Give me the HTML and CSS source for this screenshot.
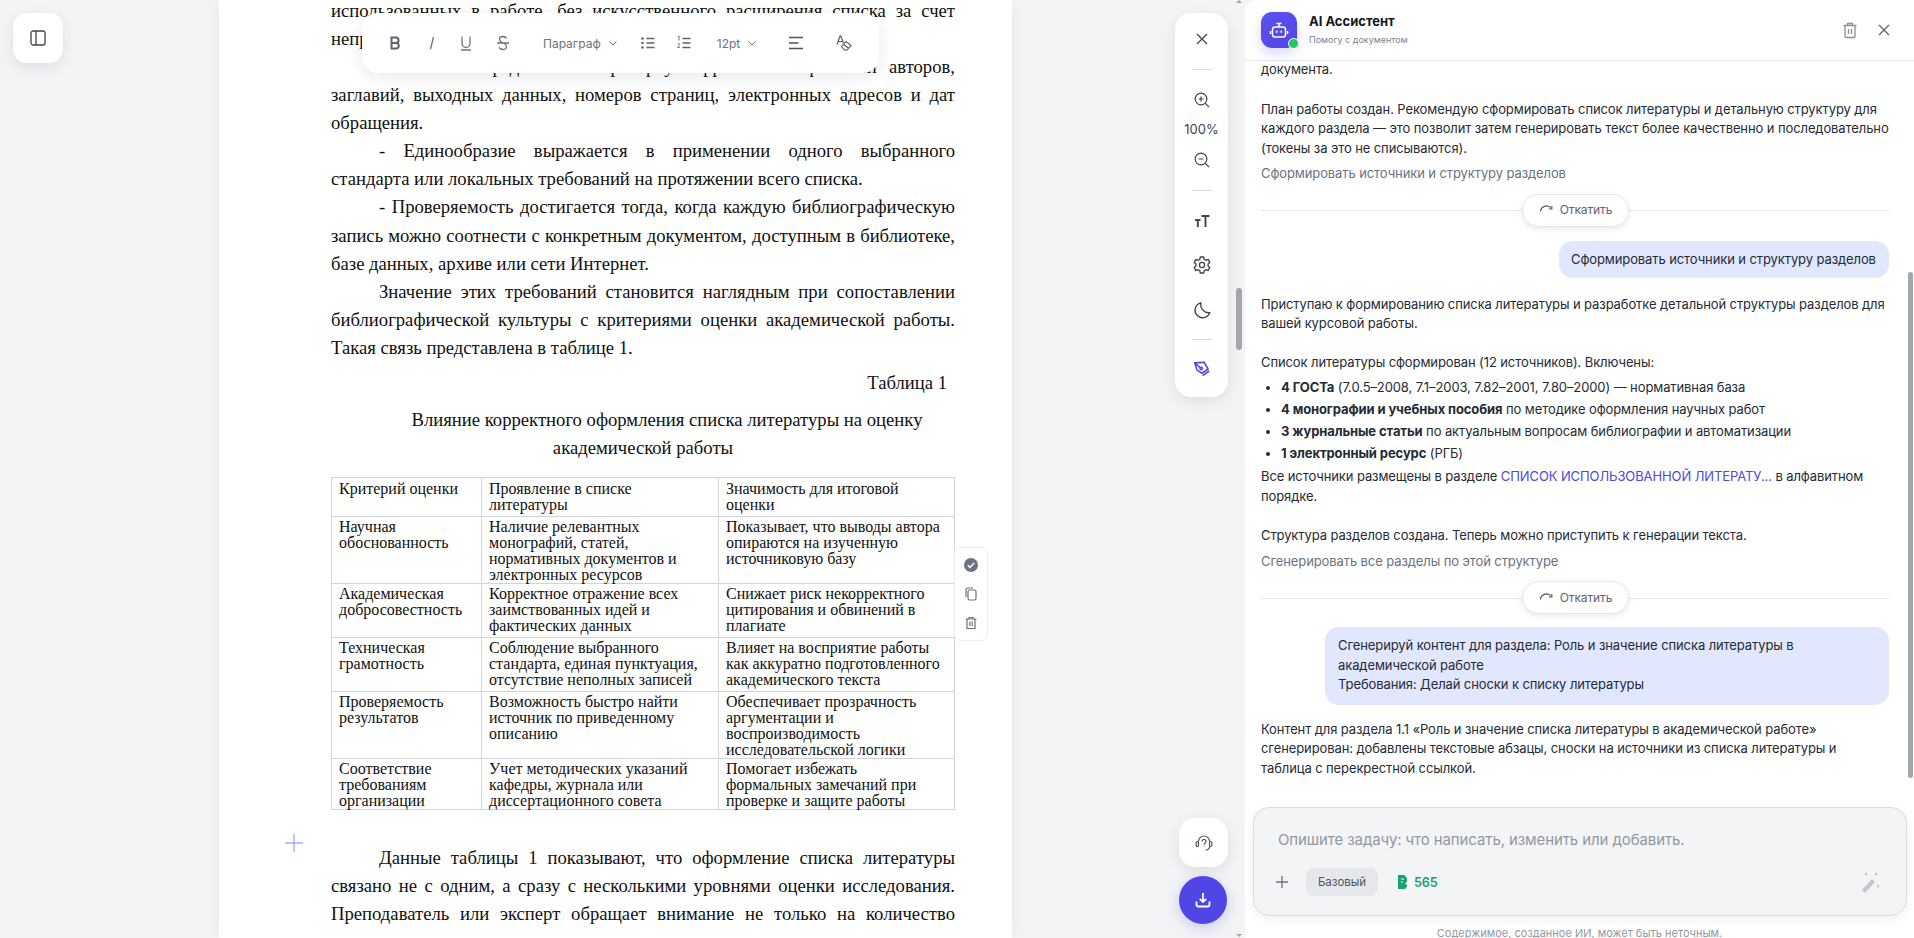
FILE: index.html
```html
<!DOCTYPE html>
<html lang="ru">
<head>
<meta charset="utf-8">
<title>AI Ассистент</title>
<link rel="stylesheet" href="styles.css">
</head>
<body>
<div class="app">
  <aside class="gutter">
    <button class="side-btn"><svg width="18" height="18" viewBox="0 0 18 18" fill="none" stroke="#3f4651" stroke-width="1.3"><rect x="2" y="2" width="14" height="14" rx="2"/><path d="M7 2v14"/></svg></button>
  </aside>
  <main class="page">
    <div class="sheet">
      <p class="p cont">использованных в работе, без искусственного расширения списка за счет</p>
      <p class="p last">непроверенных источников.</p>
      <p class="p ind">- Точность предполагает проверку корректности фамилий авторов,</p>
      <p class="p">заглавий, выходных данных, номеров страниц, электронных адресов и дат</p>
      <p class="p last">обращения.</p>
      <p class="p ind">- Единообразие выражается в применении одного выбранного</p>
      <p class="p last">стандарта или локальных требований на протяжении всего списка.</p>
      <p class="p ind">- Проверяемость достигается тогда, когда каждую библиографическую</p>
      <p class="p">запись можно соотнести с конкретным документом, доступным в библиотеке,</p>
      <p class="p last">базе данных, архиве или сети Интернет.</p>
      <p class="p ind">Значение этих требований становится наглядным при сопоставлении</p>
      <p class="p">библиографической культуры с критериями оценки академической работы.</p>
      <p class="p last">Такая связь представлена в таблице 1.</p>
      <p class="tcap">Таблица 1</p>
      <p class="ttitle">Влияние корректного оформления списка литературы на оценку академической работы</p>
      <div class="twrap">
        <table class="tbl">
          <colgroup><col class="c1"><col class="c2"><col class="c3"></colgroup>
          <tr class="head"><td>Критерий оценки</td><td>Проявление в списке литературы</td><td>Значимость для итоговой оценки</td></tr>
          <tr class="tight"><td>Научная обоснованность</td><td>Наличие релевантных монографий, статей, нормативных документов и электронных ресурсов</td><td>Показывает, что выводы автора опираются на изученную источниковую базу</td></tr>
          <tr><td>Академическая добросовестность</td><td>Корректное отражение всех заимствованных идей и фактических данных</td><td>Снижает риск некорректного цитирования и обвинений в плагиате</td></tr>
          <tr><td>Техническая грамотность</td><td>Соблюдение выбранного стандарта, единая пунктуация, отсутствие неполных записей</td><td>Влияет на восприятие работы как аккуратно подготовленного академического текста</td></tr>
          <tr class="tight"><td>Проверяемость результатов</td><td>Возможность быстро найти источник по приведенному описанию</td><td>Обеспечивает прозрачность аргументации и воспроизводимость исследовательской логики</td></tr>
          <tr class="tight"><td>Соответствие требованиям организации</td><td>Учет методических указаний кафедры, журнала или диссертационного совета</td><td>Помогает избежать формальных замечаний при проверке и защите работы</td></tr>
        </table>
        <div class="tactions">
          <svg width="16" height="16" viewBox="0 0 16 16"><circle cx="8" cy="8" r="7" fill="#6b7280"/><path d="M4.800 8.200l2.200 2.200 4.200-4.400" fill="none" stroke="#fff" stroke-width="1.500"/></svg>
          <svg width="16" height="16" viewBox="0 0 16 16" fill="none" stroke="#6b7280" stroke-width="1.200"><rect x="5" y="4" width="8" height="10" rx="1.500"/><path d="M3 11V3.500A1.500 1.500 0 0 1 4.500 2H10"/></svg>
          <svg width="16" height="16" viewBox="0 0 16 16" fill="none" stroke="#6b7280" stroke-width="1.200"><path d="M2.500 4h11M6 4V2.500h4V4M4 4v9.500h8V4M6.800 6.500v4.500M9.200 6.500v4.500"/></svg>
        </div>
        <svg class="addrow" width="20" height="20" viewBox="0 0 20 20" fill="none" stroke="#a3b3f5" stroke-width="1.400"><path d="M10 1v18M1 10h18"/></svg>
      </div>
      <p class="p ind first-after">Данные таблицы 1 показывают, что оформление списка литературы</p>
      <p class="p">связано не с одним, а сразу с несколькими уровнями оценки исследования.</p>
      <p class="p">Преподаватель или эксперт обращает внимание не только на количество</p>
    </div>
    <div class="toolbar">
      <svg class="ti" viewBox="0 0 18 18" fill="none" stroke="#5b6470" stroke-width="2"><path d="M5.500 3.500h4.300a2.700 2.700 0 0 1 0 5.500H5.500zM5.500 9h5a2.800 2.800 0 0 1 0 5.500h-5z"/></svg>
      <svg class="ti g1" viewBox="0 0 18 18" fill="none" stroke="#6b7280" stroke-width="1.300"><path d="M10.500 3L7.500 15"/></svg>
      <svg class="ti g2" viewBox="0 0 18 18" fill="none" stroke="#6b7280" stroke-width="1.300"><path d="M5 2.500v7a4 4 0 0 0 8 0v-7M4 16h10"/></svg>
      <svg class="ti g3" viewBox="0 0 18 18" fill="none" stroke="#6b7280" stroke-width="1.300"><path d="M12.500 4.500C12 3 10.500 2.500 9 2.500 7 2.500 5.500 3.500 5.500 5.200S7 8 9 9c2 .8 3.500 1.500 3.500 3.300s-1.500 3.200-3.500 3.200c-1.700 0-3.200-.7-3.800-2.200M3 9h12"/></svg>
      <span class="tsel par">Параграф <svg width="10" height="10" viewBox="0 0 10 10" fill="none" stroke="#6b7280"><path d="M1.500 3.500L5 7l3.500-3.500"/></svg></span>
      <svg class="ti l1" viewBox="0 0 18 18" fill="none" stroke="#5b6470" stroke-width="1.500"><path d="M7.500 4.500h8M7.500 9h8M7.500 13.500h8"/><circle cx="3.500" cy="4.500" r="1.300" fill="#5b6470" stroke="none"/><circle cx="3.500" cy="9" r="1.300" fill="#5b6470" stroke="none"/><circle cx="3.500" cy="13.500" r="1.300" fill="#5b6470" stroke="none"/></svg>
      <svg class="ti g4" viewBox="0 0 18 18" fill="none" stroke="#5b6470" stroke-width="1.300"><path d="M7.500 4.500h8M7.500 9h8M7.500 13.500h8"/><path d="M3 2.500l1-.5v4.500M2.500 10c.5-.8 2.300-.7 2.300.5 0 1-1.300 1.500-2.300 2.800h2.500" stroke-width=".9"/></svg>
      <span class="tsel pt">12pt <svg width="10" height="10" viewBox="0 0 10 10" fill="none" stroke="#6b7280"><path d="M1.500 3.500L5 7l3.500-3.500"/></svg></span>
      <svg class="ti al" viewBox="0 0 18 18" fill="none" stroke="#4b5563" stroke-width="1.700"><path d="M2 3.500h14M2 9h9.500M2 14.500h14"/></svg>
      <svg class="ti g5" viewBox="0 0 18 18" fill="none" stroke="#4b5563" stroke-width="1.100"><path d="M2 10.500L5 2h.8l2.700 7M3 7.500h4.300M6.500 12.500l4.500-5 5 4-4 4.500H9.500zM8.500 10.300l5 4"/></svg>
    </div>
  </main>
  <nav class="tools">
    <div class="tool-card">
      <svg class="i" viewBox="0 0 18 18" fill="none" stroke="#3f4651" stroke-width="1.300"><path d="M4 4l10 10M14 4L4 14"/></svg>
      <i class="sep sep1"></i>
      <svg class="i zoom1" viewBox="0 0 18 18" fill="none" stroke="#3f4651" stroke-width="1.200"><circle cx="8" cy="8" r="5.800"/><path d="M12.300 12.300L16 16M8 5.500v5M5.500 8h5"/></svg>
      <span class="pct">100%</span>
      <svg class="i zoom2" viewBox="0 0 18 18" fill="none" stroke="#3f4651" stroke-width="1.200"><circle cx="8" cy="8" r="5.800"/><path d="M12.300 12.300L16 16M5.500 8h5"/></svg>
      <i class="sep sep2"></i>
      <svg class="tt" viewBox="0 0 20 20" fill="none" stroke="#3f4651" stroke-width="1.900"><path d="M9.500 5h8M13.500 5v11M3 9h5.500M5.800 9v7"/></svg>
      <svg class="i gear" viewBox="0 0 18 18" fill="none" stroke="#3f4651" stroke-width="1.200"><path d="M7.500 1.800h3l.5 2 1.600.9 2-.6 1.400 2.500-1.500 1.500v1.800l1.500 1.500-1.400 2.500-2-.6-1.600.9-.5 2h-3l-.5-2-1.600-.9-2 .6L2 11.400l1.500-1.500V8.100L2 6.600l1.400-2.500 2 .6L7 3.800z"/><circle cx="9" cy="9" r="2.300"/></svg>
      <svg class="i moon" viewBox="0 0 18 18" fill="none" stroke="#3f4651" stroke-width="1.200"><path d="M8 2.500a6.800 6.800 0 1 0 8 8.800c-4.500 1-8.800-3.500-8-8.800z"/></svg>
      <i class="sep sep3"></i>
      <svg class="i pen" viewBox="0 0 18 18" fill="none" stroke="#4f46e5" stroke-width="1.400"><path d="M2.500 3.500l8.500-.5 3.500 6-5.500 3.800-4.500-2.800zM2.500 3.500l4.800 4.300M9.500 15l6-4.200"/><circle cx="8.300" cy="8.500" r="1.100"/></svg>
    </div>
    <div class="bottom-tools">
      <button class="help"><svg width="20" height="20" viewBox="0 0 20 20" fill="none" stroke="#4b5563" stroke-width="1.200"><path d="M4.500 8.500a5.500 5.500 0 0 1 11 0"/><rect x="2.200" y="8.500" width="2.300" height="5" rx="1"/><rect x="15.500" y="8.500" width="2.300" height="5" rx="1"/><path d="M15.500 13.500c0 2.500-2 3.500-4 3.500M8 8.500a2 2 0 1 1 3 1.700c-.7.500-1 .900-1 1.600M10 13.300v.5"/></svg></button>
      <button class="dl"><svg width="20" height="20" viewBox="0 0 20 20" fill="none" stroke="#fff" stroke-width="1.800"><path d="M10 3v9M6.700 8.800l3.300 3.300 3.300-3.300M3.500 11.500v3a2 2 0 0 0 2 2h9a2 2 0 0 0 2-2v-3"/></svg></button>
    </div>
    <i class="doc-thumb"></i>
    <i class="arrow up"></i>
    <i class="arrow down"></i>
  </nav>
  <section class="panel">
    <header class="phead">
      <div class="avatar">
        <svg width="20" height="20" viewBox="0 0 20 20" fill="none" stroke="#fff" stroke-width="1.500"><rect x="3.500" y="7" width="13" height="10" rx="2.500"/><path d="M10 7V4M7.500 3.500h5M1.500 11v3M18.500 11v3M7.800 10.800v2M12.200 10.800v2"/></svg>
        <i class="dot"></i>
      </div>
      <div class="ptitle"><b>AI Ассистент</b><span>Помогу с документом</span></div>
      <svg class="hicon trash" viewBox="0 0 18 18" fill="none" stroke="#8b8f96" stroke-width="1.300"><path d="M2.500 4.500h13M6.500 4.500V2.500h5v2M4 4.500v11a1 1 0 0 0 1 1h8a1 1 0 0 0 1-1v-11M7.500 8v5M10.500 8v5"/></svg>
      <svg class="hicon close" viewBox="0 0 18 18" fill="none" stroke="#5b6470" stroke-width="1.300"><path d="M4 4l10 10M14 4L4 14"/></svg>
    </header>
    <div class="chat">
      <div class="thread">
        <p class="m">документа.</p>
        <p class="m gap">План работы создан. Рекомендую сформировать список литературы и детальную структуру для каждого раздела — это позволит затем генерировать текст более качественно и последовательно (токены за это не списываются).</p>
        <p class="sug">Сформировать источники и структуру разделов</p>
        <div class="rollback"><span><svg width="16" height="16" viewBox="0 0 16 16" fill="none" stroke="#4b5563" stroke-width="1.200"><path d="M2.500 9.500A6 6 0 0 1 12.500 5.500M13.800 4v3h-3" /></svg>Откатить</span></div>
        <div class="user one">Сформировать источники и структуру разделов</div>
        <p class="m a1">Приступаю к формированию списка литературы и разработке детальной структуры разделов для вашей курсовой работы.</p>
        <p class="m gap2">Список литературы сформирован (12 источников). Включены:</p>
        <ul class="lst">
          <li><b>4 ГОСТа</b> (7.0.5–2008, 7.1–2003, 7.82–2001, 7.80–2000) — нормативная база</li>
          <li><b>4 монографии и учебных пособия</b> по методике оформления научных работ</li>
          <li><b>3 журнальные статьи</b> по актуальным вопросам библиографии и автоматизации</li>
          <li><b>1 электронный ресурс</b> (РГБ)</li>
        </ul>
        <p class="m">Все источники размещены в разделе <a class="link">СПИСОК ИСПОЛЬЗОВАННОЙ ЛИТЕРАТУ...</a> в алфавитном порядке.</p>
        <p class="m gap">Структура разделов создана. Теперь можно приступить к генерации текста.</p>
        <p class="sug">Сгенерировать все разделы по этой структуре</p>
        <div class="rollback"><span><svg width="16" height="16" viewBox="0 0 16 16" fill="none" stroke="#4b5563" stroke-width="1.200"><path d="M2.500 9.500A6 6 0 0 1 12.500 5.500M13.800 4v3h-3" /></svg>Откатить</span></div>
        <div class="user two">Сгенерируй контент для раздела: Роль и значение списка литературы в академической работе<br>Требования: Делай сноски к списку литературы</div>
        <p class="m a2">Контент для раздела 1.1 «Роль и значение списка литературы в академической работе» сгенерирован: добавлены текстовые абзацы, сноски на источники из списка литературы и таблица с перекрестной ссылкой.</p>
      </div>
      <div class="sbar"><i></i></div>
    </div>
    <div class="composer">
      <div class="ph">Опишите задачу: что написать, изменить или добавить.</div>
      <div class="crow">
        <svg width="16" height="16" viewBox="0 0 16 16" fill="none" stroke="#6b7280" stroke-width="1.300"><path d="M8 2v12M2 8h12"/></svg>
        <span class="tier">Базовый</span>
        <span class="tok"><svg width="14" height="16" viewBox="0 0 14 16"><path d="M2 1h6l3 3v3.500L9 9.500l2.500 2L9 15H2z" fill="#16a36f"/><path d="M5 5h3M5 8h2" stroke="#fff" stroke-width="1.200"/></svg>565</span>
        <svg class="wand" width="24" height="24" viewBox="0 0 24 24" fill="none"><path d="M3 20l10-11 3 3-10 11z" fill="#c4c8ce"/><path d="M6 3l2 2M8 3L6 5M16 3l2 2M18 3l-2 2M18 15l2 2M20 15l-2 2" stroke="#c4c8ce" stroke-width="1.200"/></svg>
      </div>
    </div>
    <div class="foot">Содержимое, созданное ИИ, может быть неточным.</div>
  </section>
</div>
</body>
</html>
```
FILE: styles.css
```css
* { box-sizing: border-box; }
html, body { margin: 0; height: 100%; overflow: hidden; }
body { font-family: "Inter", "Noto Sans", sans-serif; background: #f3f4f6; color: #1f2937; }
p { margin: 0; }
button { border: 0; padding: 0; cursor: pointer; }
.app { display: flex; width: 1914px; height: 938px; overflow: hidden; }

.gutter { width: 219px; flex: none; padding: 13px 0 0 13px; }
.side-btn { width: 50px; height: 50px; border-radius: 14px; background: #fff; box-shadow: 0 4px 14px rgba(30,40,60,.1); display: flex; align-items: center; justify-content: center; }

.page { width: 793px; flex: none; position: relative; background: #fff; box-shadow: 0 0 12px rgba(30,40,60,.06); overflow: hidden; }
.sheet { padding: 0 57px 0 112px; margin-top: -3px; font: 18.67px/28.07px "Liberation Serif", serif; color: #111; }
.p { text-align: justify; text-align-last: justify; white-space: nowrap; }
.p.last { text-align-last: left; }
.ind { text-indent: 48px; }
.tcap { text-align: right; padding-right: 8px; margin-top: 7px; }
.ttitle { width: 560px; margin: 9px auto 0; text-align: center; text-indent: 48px; }
.twrap { position: relative; margin-top: 15px; }
.tbl { width: 623px; table-layout: fixed; border-collapse: collapse; font-size: 16px; line-height: 16px; }
.c1 { width: 150px; } .c2 { width: 237px; } .c3 { width: 236px; }
.tbl td { border: 1px solid #d1d5db; padding: 2px 7px 3px; vertical-align: top; }
.tbl .head td { padding-top: 3px; }
.tbl .tight td { padding-bottom: 0; }
.tactions { position: absolute; left: 623px; top: 70px; width: 34px; height: 94px; padding: 9px 0; background: #fff; border: 1px solid #eceef1; border-radius: 7px; display: flex; flex-direction: column; align-items: center; justify-content: space-between; }
.addrow { position: absolute; left: -47px; bottom: -43px; }
.first-after { margin-top: 34px; }

.toolbar { position: absolute; left: 143px; top: 13px; width: 517px; height: 60px; border-radius: 16px; background: #fff; box-shadow: 0 4px 16px rgba(30,40,60,.1); display: flex; align-items: center; padding: 0 0 0 24px; color: #6b7280; font-size: 12px; }
.ti { width: 18px; height: 18px; flex: none; }
.g1 { margin-left: 19px; } .g2 { margin-left: 16px; } .g3 { margin-left: 19px; }
.tsel { display: inline-flex; align-items: center; gap: 7px; white-space: nowrap; }
.par { margin-left: 31px; }
.l1 { margin-left: 21px; } .g4 { margin-left: 18px; }
.pt { margin-left: 24px; }
.al { margin-left: 30px; } .g5 { margin-left: 30px; }

.tools { width: 233px; flex: none; position: relative; display: flex; flex-direction: column; justify-content: space-between; align-items: flex-start; padding: 13px 0 14px 163px; }
.tool-card { width: 53px; height: 384px; flex: none; background: #fff; border-radius: 16px; box-shadow: 0 4px 14px rgba(30,40,60,.1); display: flex; flex-direction: column; align-items: center; padding-top: 17px; }
.i { width: 18px; height: 18px; flex: none; }
.sep { display: block; width: 20px; height: 1px; background: #d8dce1; flex: none; }
.sep1 { margin-top: 21px; } .zoom1 { margin-top: 21px; }
.pct { font-size: 13px; color: #3f4651; margin-top: 13px; line-height: 15px; }
.zoom2 { margin-top: 14px; } .sep2 { margin-top: 21px; }
.tt { margin-top: 20px; width: 20px; height: 20px; flex: none; }
.gear { margin-top: 24px; width: 20px; height: 20px; } .moon { margin-top: 25px; width: 20px; height: 20px; }
.sep3 { margin-top: 19px; } .pen { margin-top: 19px; width: 20px; height: 20px; }
.bottom-tools { display: flex; flex-direction: column; gap: 9px; margin-left: 4px; }
.help { width: 49px; height: 49px; border-radius: 16px; background: #fff; box-shadow: 0 4px 14px rgba(30,40,60,.1); display: flex; align-items: center; justify-content: center; }
.dl { width: 48px; height: 48px; border-radius: 50%; background: #4f46e5; box-shadow: 0 4px 14px rgba(79,70,229,.25); display: flex; align-items: center; justify-content: center; }
.doc-thumb { position: absolute; right: 3px; top: 288px; width: 6px; height: 62px; border-radius: 3px; background: #a3a6ab; }
.arrow { position: absolute; right: 3px; width: 0; height: 0; border-left: 3px solid transparent; border-right: 3px solid transparent; }
.arrow.up { top: 0; border-bottom: 3px solid #a3a6ab; }
.arrow.down { bottom: 1px; border-top: 3px solid #a3a6ab; }

.panel { flex: 1; background: #fff; display: flex; flex-direction: column; min-width: 0; border-top-left-radius: 12px; }
.phead { height: 61px; flex: none; border-bottom: 1px solid #e5e7eb; display: flex; align-items: center; padding: 0 21px 0 16px; }
.avatar { width: 36px; height: 36px; border-radius: 11px; background: linear-gradient(135deg,#5b52f0,#4f46e5); position: relative; display: flex; align-items: center; justify-content: center; box-shadow: 0 6px 12px rgba(79,70,229,.2); margin-top: -1px; }
.dot { position: absolute; right: -2px; bottom: -1px; width: 11px; height: 11px; border-radius: 50%; background: #22c55e; border: 1.500px solid #fff; }
.ptitle { margin-left: 12px; display: flex; flex-direction: column; flex: 1; margin-top: -2px; }
.ptitle b { font-size: 13px; line-height: 17px; font-weight: 700; color: #111827; }
.ptitle span { font-size: 9px; line-height: 12px; margin-top: 4px; color: #7b8390; }
.hicon { width: 18px; height: 18px; flex: none; }
.close { margin-left: 16px; }

.chat { flex: 1; min-height: 0; position: relative; overflow: hidden; }
.thread { padding: 0 25px 0 16px; font-size: 13px; line-height: 19.500px; color: #242b36; letter-spacing: -.1px; margin-top: -1px; }
.gap { margin-top: 20px; }
.gap2 { margin-top: 19px; }
.sug { color: #6b7280; margin-top: 6px; }
.rollback { position: relative; margin-top: 10px; height: 33px; display: flex; justify-content: center; align-items: center; }
.rollback::before { content: ""; position: absolute; left: 0; right: 0; top: 50%; height: 1px; background: #e5e7eb; }
.rollback span { position: relative; background: #fff; border: 1px solid #e5e7eb; border-radius: 17px; height: 33px; width: 107px; display: inline-flex; align-items: center; justify-content: center; gap: 6px; font-size: 12px; color: #5b6470; box-shadow: 0 2px 6px rgba(30,40,60,.1); }
.user { background: #e0e7ff; border-radius: 14px; margin-left: auto; }
.user.one { width: 330px; height: 37px; margin-top: 14px; padding: 9px 12px; white-space: nowrap; }
.user.two { width: 564px; margin-top: 13px; padding: 9px 13px 10px; }
.a1 { margin-top: 17px; }
.a2 { margin-top: 15px; }
.lst { margin: 4px 0 3px; padding: 0 0 0 20px; list-style: disc; }
.lst li { line-height: 22px; }
.link { color: #4f46e5; }
.sbar { position: absolute; right: 1px; top: 0; bottom: 0; width: 5px; }
.sbar i { position: absolute; left: 0; top: 211px; bottom: 29px; width: 5px; background: #a3a6ab; border-radius: 3px; }

.composer { flex: none; height: 109px; margin: 0 7px 0 8px; background: #f3f4f6; border: 1px solid #d8dce1; border-radius: 16px; padding: 20px 23px 0 15px; box-shadow: 0 4px 12px rgba(30,40,60,.06); }
.ph { font-size: 15px; line-height: 24px; color: #9298a2; padding-left: 9px; letter-spacing: -.1px; }
.crow { display: flex; align-items: center; margin-top: 16px; padding-left: 5px; }
.tier { margin-left: 16px; width: 72px; height: 28px; border-radius: 8px; background: #e5e7eb; display: flex; align-items: center; justify-content: center; font-size: 11.500px; color: #4b5563; }
.tok { margin-left: 18px; display: inline-flex; align-items: center; gap: 4px; color: #16a36f; font-weight: 600; font-size: 12.500px; }
.wand { margin-left: auto; }
.foot { height: 22px; flex: none; text-align: center; font-size: 11px; line-height: 18px; padding-top: 8px; color: #9298a2; }
```
